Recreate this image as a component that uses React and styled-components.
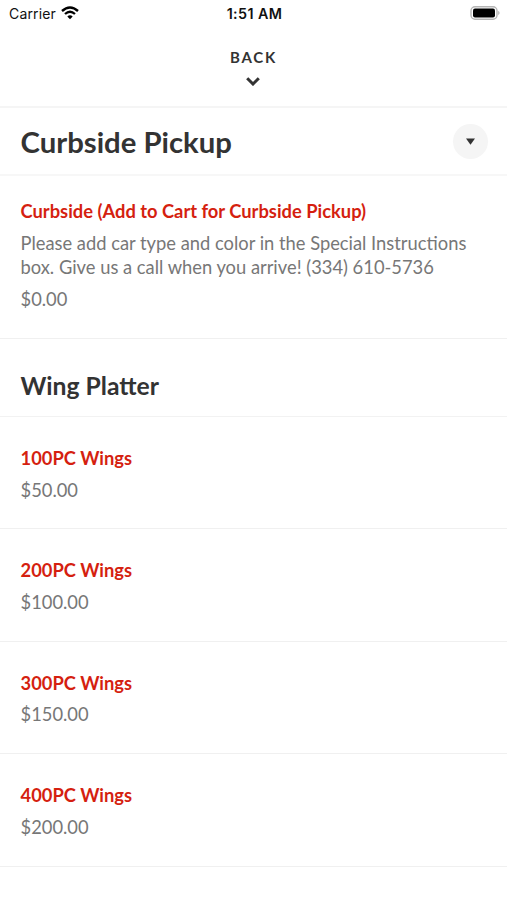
import React from "react";
import styled, { createGlobalStyle } from "styled-components";

const GlobalStyle = createGlobalStyle`
  * {
    box-sizing: border-box;
  }

  body {
    margin: 0;
    background-color: #fff;
    font-family: Lato, "Liberation Sans", sans-serif;
    color: #333;
  }
`;

const Screen = styled.div`
  width: 507px;
  height: 900px;
  overflow: hidden;
`;

const StatusBar = styled.div`
  display: grid;
  grid-template-columns: 1fr auto 1fr;
  align-items: center;
  height: 27px;
  padding: 0 7px 0 9px;
  font-family: Inter, sans-serif;
  font-size: 14px;
  color: #111;
`;

const Carrier = styled.div`
  display: flex;
  align-items: center;
  gap: 5.5px;
  letter-spacing: 0.15px;

  svg {
    margin-bottom: 1px;
  }
`;

const Clock = styled.div`
  font-weight: 600;
  font-size: 14.3px;
  letter-spacing: 0.4px;
`;

const Battery = styled.svg`
  justify-self: end;
  margin-bottom: 1px;
`;

const BackButton = styled.button`
  display: flex;
  flex-direction: column;
  align-items: center;
  gap: 10px;
  width: 100%;
  height: 81px;
  padding: 21px 1px 0 0;
  border: none;
  border-bottom: 2px solid #f5f5f5;
  background-color: transparent;
  font-family: inherit;
  font-size: 15px;
  font-weight: 700;
  line-height: 19px;
  letter-spacing: 1.8px;
  color: #333;
  cursor: pointer;

  span {
    padding-left: 1px;
  }
`;

const CategoryHeader = styled.div`
  display: flex;
  align-items: center;
  justify-content: space-between;
  height: 68px;
  padding: 0 19px 0 20.5px;
  border-bottom: 2px solid #f7f7f7;

  h1 {
    margin: 0;
    font-size: 29.3px;
    font-weight: 700;
  }
`;

const DropdownButton = styled.button`
  display: flex;
  align-items: center;
  justify-content: center;
  width: 35px;
  height: 35px;
  padding: 0;
  border: none;
  border-radius: 50%;
  background-color: #f5f5f5;
  cursor: pointer;
`;

const SectionTitle = styled.h2`
  height: 78px;
  margin: 0;
  padding: 32px 20.5px 0;
  border-bottom: 1px solid #f2f2f2;
  font-size: 24.7px;
  font-weight: 700;
  line-height: 30px;
`;

const MenuItem = styled.div`
  height: ${(props) => props.$height || "112.4px"};
  padding: ${(props) => props.$top || "29px"} 20.5px 0;
  border-bottom: 1px solid #f0f0f0;
  font-size: 18.34px;
  line-height: 24.5px;
  color: #777;
`;

const ItemName = styled.div`
  font-weight: 700;
  color: #d51f10;
`;

const ItemInfo = styled.div`
  margin-top: 7.2px;
`;

const wings = [
  { name: "100PC Wings", price: "$50.00" },
  { name: "200PC Wings", price: "$100.00" },
  { name: "300PC Wings", price: "$150.00" },
  { name: "400PC Wings", price: "$200.00" },
];

const App = () => {
  return (
    <Screen>
      <GlobalStyle />
      <StatusBar>
        <Carrier>
          <span>Carrier</span>
          <svg width="18" height="14" viewBox="0 0 18 14" fill="none">
            <path d="M1 5 Q9 -2 17 5" stroke="#000" strokeWidth="2.4" />
            <path d="M4 8 Q9 3.5 14 8" stroke="#000" strokeWidth="2.3" />
            <path d="M6.3 10.4 Q9 8 11.7 10.4 L9 13.2Z" fill="#000" />
          </svg>
        </Carrier>
        <Clock>1:51 AM</Clock>
        <Battery width="30" height="14" viewBox="0 0 30 14">
          <rect x="1" y="0.7" width="26" height="12.6" rx="4" fill="none" stroke="#b5b5b5" strokeWidth="1.4" />
          <rect x="3" y="2.6" width="22" height="8.8" rx="2" fill="#000" />
          <path d="M28.2 4.8 Q31 7 28.2 9.2Z" fill="#b5b5b5" />
        </Battery>
      </StatusBar>

      <BackButton>
        <span>BACK</span>
        <svg width="14" height="9" viewBox="0 0 14 9" fill="none">
          <path d="M1.2 1.2 L7 7 L12.8 1.2" stroke="#333" strokeWidth="3" />
        </svg>
      </BackButton>

      <CategoryHeader>
        <h1>Curbside Pickup</h1>
        <DropdownButton aria-label="Categories">
          <svg width="9" height="7" viewBox="0 0 9 7">
            <path d="M0 0.5H9L4.5 6.8Z" fill="#333" />
          </svg>
        </DropdownButton>
      </CategoryHeader>

      <MenuItem $height="163px" $top="23.3px">
        <ItemName>Curbside (Add to Cart for Curbside Pickup)</ItemName>
        <ItemInfo>
          Please add car type and color in the Special Instructions box. Give us
          a call when you arrive! (334) 610-5736
        </ItemInfo>
        <ItemInfo>$0.00</ItemInfo>
      </MenuItem>

      <SectionTitle>Wing Platter</SectionTitle>
      {wings.map((item) => (
        <MenuItem key={item.name}>
          <ItemName>{item.name}</ItemName>
          <ItemInfo>{item.price}</ItemInfo>
        </MenuItem>
      ))}
    </Screen>
  );
};

export default App;
